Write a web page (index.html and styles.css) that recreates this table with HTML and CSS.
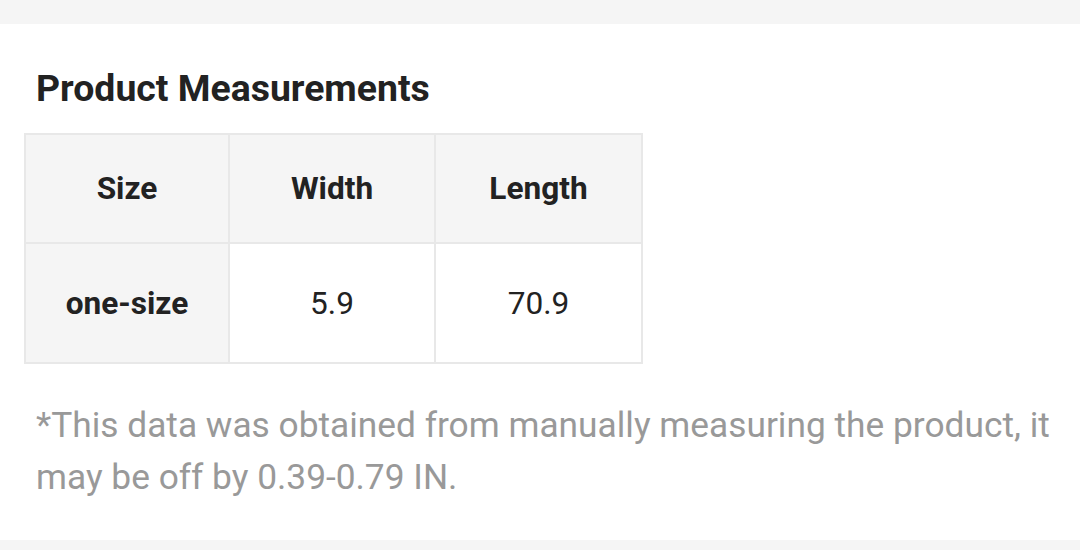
FILE: index.html
```html
<!DOCTYPE html>
<html>
<head>
<meta charset="utf-8">
<link rel="stylesheet" href="styles.css">
</head>
<body>
<div class="band"></div>
<section class="card">
  <h2 class="title">Product Measurements</h2>
  <table class="sizes">
    <colgroup>
      <col class="col-first">
      <col class="col-mid">
      <col>
    </colgroup>
    <thead>
      <tr><th>Size</th><th>Width</th><th>Length</th></tr>
    </thead>
    <tbody>
      <tr><td class="size-name">one-size</td><td>5.9</td><td>70.9</td></tr>
    </tbody>
  </table>
  <p class="note">*This data was obtained from manually measuring the product, it may be off by 0.39-0.79 IN.</p>
</section>
<div class="band band-bottom"></div>
</body>
</html>
```
FILE: styles.css
```css
html, body {
  margin: 0;
  padding: 0;
  background: #fff;
  font-family: Roboto, "Liberation Sans", sans-serif;
  color: #222;
}
.band {
  height: 24px;
  background: #f5f5f5;
}
.card {
  padding: 44px 24px 0 24px;
  height: 516px;
  box-sizing: border-box;
}
.title {
  margin: 0 0 0 12px;
  font-size: 37.4px;
  font-weight: 700;
  line-height: 40px;
  color: #222;
}
.sizes {
  margin-top: 25px;
  width: 619px;
  table-layout: fixed;
  border-collapse: collapse;
  border: 2px solid #e8e8e8;
}
.col-first { width: 204px; }
.col-mid { width: 206px; }
.sizes th, .sizes td {
  border: 2px solid #e8e8e8;
  text-align: center;
  font-size: 31.6px;
  color: #222;
  padding: 0;
}
.sizes th {
  height: 107px;
  background: #f5f5f5;
  font-weight: 700;
}
.sizes td {
  height: 118px;
  font-weight: 400;
}
.sizes td.size-name {
  background: #f5f5f5;
  font-weight: 700;
}
.note {
  margin: 35px 0 0 12px;
  font-size: 35.3px;
  line-height: 52px;
  color: #999;
}
```
